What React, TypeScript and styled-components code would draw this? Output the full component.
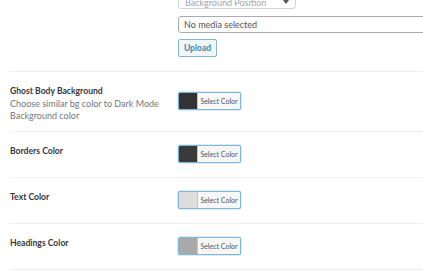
import styled, { createGlobalStyle } from 'styled-components'

const GlobalStyle = createGlobalStyle`
  html, body {
    margin: 0;
    padding: 0;
    background: #fff;
    overflow: hidden;
  }
  body {
    font-family: Lato, 'Open Sans', sans-serif;
    color: #23282d;
  }
`

type ColorSetting = {
  label: string
  description?: string
  swatch: string
}

const settings: ColorSetting[] = [
  {
    label: 'Ghost Body Background',
    description: 'Choose similar bg color to Dark Mode Background color',
    swatch: '#333333',
  },
  { label: 'Borders Color', swatch: '#3a3a3a' },
  { label: 'Text Color', swatch: '#dddddd' },
  { label: 'Headings Color', swatch: '#a9a9a9' },
  { label: 'Links Color', swatch: '#2f6f8f' },
]

export default function App() {
  return (
    <>
      <GlobalStyle />
      <Page>
        <FormTable>
          <tbody>
            <TopRow>
              <Th />
              <Td>
                <MediaField>
                  <SelectBox>
                    <span>Background Position</span>
                    <Caret />
                  </SelectBox>
                  <MediaInput readOnly value="No media selected" />
                  <UploadButton>Upload</UploadButton>
                </MediaField>
              </Td>
            </TopRow>
            {settings.map((s) => (
              <Row key={s.label}>
                <Th>
                  <Label>{s.label}</Label>
                  {s.description && <Description>{s.description}</Description>}
                </Th>
                <Td>
                  <ColorButton>
                    <Swatch $color={s.swatch} />
                    <ColorText>Select Color</ColorText>
                  </ColorButton>
                </Td>
              </Row>
            ))}
          </tbody>
        </FormTable>
      </Page>
    </>
  )
}

const Page = styled.div`
  margin-top: -10px;
  padding-left: 10px;
  width: 600px;
`

const FormTable = styled.table`
  width: 100%;
  border-collapse: collapse;
  border-spacing: 0;
`

const Row = styled.tr`
  border-bottom: 1px solid #efefef;
`

const TopRow = styled(Row)`
  th,
  td {
    padding-top: 0;
    padding-bottom: 14px;
  }
`

const Th = styled.th`
  width: 168px;
  padding: 13px 0 9px;
  text-align: left;
  vertical-align: top;
  font-weight: normal;
`

const Td = styled.td`
  padding: 13px 0 14px;
  vertical-align: middle;
`

const Label = styled.div`
  font-size: 8.6px;
  line-height: 12px;
  font-weight: 700;
  color: #32373c;
`

const Description = styled.div`
  width: 150px;
  margin-top: 1px;
  font-size: 9px;
  line-height: 12px;
  color: #72777c;
`

const MediaField = styled.div`
  display: flex;
  flex-direction: column;
  align-items: flex-start;
`

const SelectBox = styled.div`
  box-sizing: border-box;
  width: 118px;
  height: 19px;
  padding: 0 6px;
  display: flex;
  align-items: flex-end;
  justify-content: space-between;
  border: 1px solid #d4d4d4;
  border-radius: 3px;
  font-size: 9px;
  line-height: 11px;
  color: #a0a5aa;
`

const Caret = styled.span`
  width: 0;
  height: 0;
  border-left: 3px solid transparent;
  border-right: 3px solid transparent;
  border-top: 4px solid #555;
  margin-bottom: 4px;
`

const MediaInput = styled.input`
  display: block;
  box-sizing: border-box;
  width: 400px;
  height: 17px;
  margin: 7px 0 0;
  padding: 0 5px;
  border: 1px solid #a9adb2;
  border-radius: 3px;
  font-family: Lato, 'Open Sans', sans-serif;
  font-size: 9px;
  color: #555;
  outline: none;
`

const UploadButton = styled.button`
  display: block;
  box-sizing: border-box;
  width: 39px;
  height: 18px;
  margin-top: 6px;
  padding: 0;
  border: 1px solid #7fb8d6;
  border-radius: 2px;
  background: #f3f5f6;
  font-family: Lato, 'Open Sans', sans-serif;
  font-size: 8.5px;
  font-weight: 700;
  color: #3a87b3;
`

const ColorButton = styled.button`
  box-sizing: border-box;
  display: flex;
  align-items: stretch;
  width: 63px;
  height: 18px;
  padding: 0;
  border: 1px solid #7fb8d6;
  border-radius: 2px;
  background: #f7f7f7;
  overflow: hidden;
  box-shadow: 0 0 0 0.5px #b9d9ea;
`

const Swatch = styled.span<{ $color: string }>`
  width: 18px;
  background: ${(p) => p.$color};
  border-right: 1px solid #c6c6c6;
`

const ColorText = styled.span`
  flex: 1;
  display: flex;
  align-items: center;
  justify-content: center;
  font-family: Lato, 'Open Sans', sans-serif;
  font-size: 7px;
  color: #555;
`
